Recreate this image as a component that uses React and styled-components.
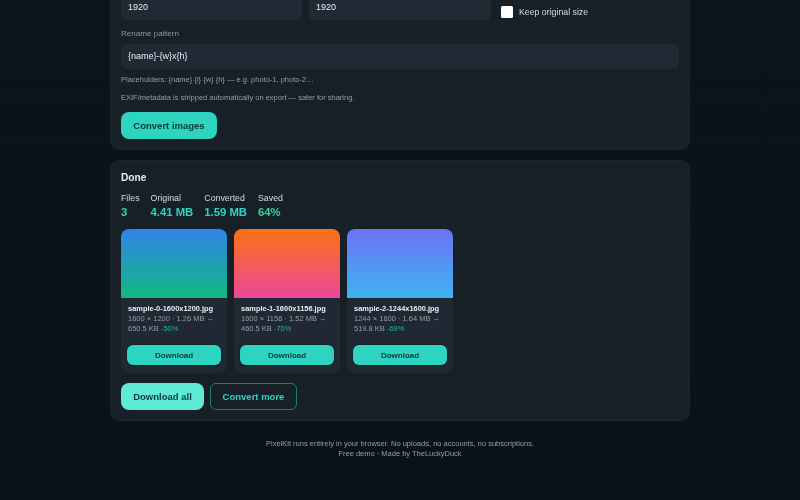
import React from 'react';
import styled, { createGlobalStyle } from 'styled-components';

const Global = createGlobalStyle`
  html, body { margin: 0; height: 100%; overflow: hidden; background: #0b1118; }
  * { box-sizing: border-box; }
  body { font-family: "Liberation Sans", Arial, sans-serif; color: #e6edf3; }
`;
const Viewport = styled.div`
  height: 500px; overflow: hidden;
  background: linear-gradient(180deg, #0c131a 0%, #0b1118 100%);
`;
const Page = styled.main`
  width: 580px; margin: -16px auto 0; display: flex; flex-direction: column; gap: 10px;
  will-change: transform;
`;
const Card = styled.section`
  background: #182027; border: 1px solid #1e2730; border-radius: 10px; padding: 10px;
  display: flex; flex-direction: column;
`;
const Row = styled.div`
  display: grid; grid-template-columns: 181px 182px 1fr; gap: 7px; align-items: start;
`;
const Input = styled.div`
  height: 25px; background: #212a34; border-radius: 6px; padding: 0 7px;
  font-size: 9px; line-height: 25px; color: #e6edf3;
`;
const Check = styled.label`
  display: flex; align-items: center; gap: 6px; font-size: 8.75px; color: #d5dbe1;
  padding-left: 3px; margin-top: 11px; height: 12px;
`;
const Box = styled.span`
  width: 12px; height: 12px; background: #fff; border-radius: 1.5px; display: block; flex: none;
`;
const Label = styled.div`
  font-size: 8.1px; color: #8d97a1; margin: 8px 0 5px; line-height: 11px;
`;
const Hint = styled.p`
  font-size: 7.5px; line-height: 10px; color: #939da7; margin: ${p => p.$mt}px 0 0;
`;
const Primary = styled.button`
  border: 0; font-family: inherit; font-weight: 700; cursor: pointer;
  background: #2dd4bf; color: #0d3b3a; border-radius: 8px;
  width: 96px; height: 27px; font-size: 9.5px; margin-top: 9px;
`;
const Title = styled.h2`
  font-size: 10.2px; line-height: 13px; font-weight: 700; margin: 0 0 8px; color: #e6edf3;
`;
const Stats = styled.div`
  display: flex; gap: 11px; margin-bottom: 9px;
`;
const Stat = styled.div`
  display: flex; flex-direction: column; font-size: 8.8px; line-height: 12px; color: #d5dbe1;
`;
const StatValue = styled.strong`
  font-size: 11.3px; line-height: 16px; color: ${p => (p.$green ? '#34d399' : '#2dd4bf')}; font-weight: 700;
`;
const Grid = styled.div`
  display: flex; gap: 7px;
`;
const Tile = styled.article`
  width: 106px; height: 144px; background: #202933; border-radius: 8px; overflow: hidden;
  display: flex; flex-direction: column;
`;
const Thumb = styled.div`
  height: 69px; flex: none; background: linear-gradient(180deg, ${p => p.$from}, ${p => p.$to});
`;
const TileBody = styled.div`
  padding: 6px 6px 0 7px; display: flex; flex-direction: column; flex: 1;
`;
const Name = styled.div`
  font-size: 7.45px; line-height: 10px; font-weight: 700; color: #e6edf3; white-space: nowrap;
`;
const Meta = styled.div`
  font-size: 7.5px; line-height: 10px; color: #939da7;
`;
const Pct = styled.span`
  color: #2bb38a;
`;
const SmallButton = styled.button`
  border: 0; font-family: inherit; font-weight: 700; cursor: pointer;
  background: #2dd4bf; color: #0d3b3a; border-radius: 6px; height: 20px; font-size: 8px;
  margin: 11px 0 0 -1px; width: calc(100% + 1px); box-shadow: 0 0 0 1px rgba(8, 14, 20, .35);
`;
const Actions = styled.div`
  display: flex; gap: 6px; margin-top: 10px;
`;
const AllButton = styled.button`
  border: 0; font-family: inherit; font-weight: 700; cursor: pointer;
  background: #5eead4; color: #0d3b3a; border-radius: 8px; height: 27px; width: 83px; font-size: 9.5px;
`;
const Ghost = styled.button`
  background: transparent; border: 1px solid #1f7f76; font-family: inherit; font-weight: 700; cursor: pointer;
  color: #2dd4bf; border-radius: 6px; height: 27px; width: 87px; font-size: 9.5px;
`;
const Footer = styled.footer`
  text-align: center; font-size: 7.5px; line-height: 10px; color: #939da7; margin-top: 8px;
`;

const files = [
  { name: 'sample-0-1600x1200.jpg', a: '1600 × 1200 · 1.26 MB →', b: '650.5 KB', p: '-50%', from: '#3182e8', to: '#10b981' },
  { name: 'sample-1-1600x1156.jpg', a: '1600 × 1156 · 1.52 MB →', b: '460.5 KB', p: '-70%', from: '#f97316', to: '#ec4899' },
  { name: 'sample-2-1244x1600.jpg', a: '1244 × 1600 · 1.64 MB →', b: '519.8 KB', p: '-69%', from: '#6d72f6', to: '#3cb4f2' },
];

export default function App() {
  return (
    <Viewport>
      <Global />
      <Page>
        <Card>
          <Row>
            <Input>1920</Input>
            <Input>1920</Input>
            <Check><Box />Keep original size</Check>
          </Row>
          <Label>Rename pattern</Label>
          <Input>{'{name}-{w}x{h}'}</Input>
          <Hint $mt={6}>{'Placeholders: {name} {i} {w} {h} — e.g. photo-1, photo-2…'}</Hint>
          <Hint $mt={8}>EXIF/metadata is stripped automatically on export — safer for sharing.</Hint>
          <Primary>Convert images</Primary>
        </Card>
        <Card>
          <Title>Done</Title>
          <Stats>
            <Stat>Files<StatValue>3</StatValue></Stat>
            <Stat>Original<StatValue>4.41 MB</StatValue></Stat>
            <Stat>Converted<StatValue>1.59 MB</StatValue></Stat>
            <Stat>Saved<StatValue $green>64%</StatValue></Stat>
          </Stats>
          <Grid>
            {files.map(f => (
              <Tile key={f.name}>
                <Thumb $from={f.from} $to={f.to} />
                <TileBody>
                  <Name>{f.name}</Name>
                  <Meta>{f.a}<br />{f.b} <Pct>{f.p}</Pct></Meta>
                  <SmallButton>Download</SmallButton>
                </TileBody>
              </Tile>
            ))}
          </Grid>
          <Actions>
            <AllButton>Download all</AllButton>
            <Ghost>Convert more</Ghost>
          </Actions>
        </Card>
        <Footer>
          PixelKit runs entirely in your browser. No uploads, no accounts, no subscriptions.<br />
          Free demo · Made by TheLuckyDuck
        </Footer>
      </Page>
    </Viewport>
  );
}
